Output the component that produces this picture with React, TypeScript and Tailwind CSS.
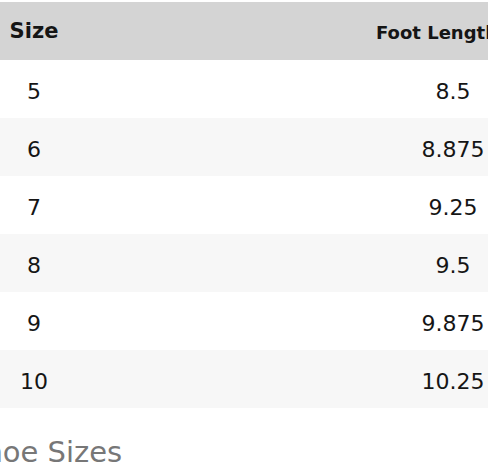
import React from 'react'

const rows = [
  { size: '5', foot: '8.5' },
  { size: '6', foot: '8.875' },
  { size: '7', foot: '9.25' },
  { size: '8', foot: '9.5' },
  { size: '9', foot: '9.875' },
  { size: '10', foot: '10.25' },
]

export default function App() {
  return (
    <div className="w-[488px] h-[466px] overflow-hidden bg-white pt-[2px] text-[#151515] font-['DejaVu_Sans',sans-serif]">
      {/* Header */}
      <div className="flex h-[58px] items-center bg-[#d4d4d4] pt-[2px] whitespace-nowrap">
        <div className="w-[68px] shrink-0 text-center text-[21px] font-bold">Size</div>
        <div className="pl-[308px] text-[18px] font-bold">Foot Length (inches)</div>
      </div>

      {/* Rows */}
      {rows.map((r, i) => (
        <div
          key={r.size}
          className={`flex h-[58px] items-center pt-[4px] text-[22px] ${i % 2 === 1 ? 'bg-[#f7f7f7]' : 'bg-white'}`}
        >
          <div className="w-[68px] shrink-0 text-center">{r.size}</div>
          <div className="flex-1" />
          <div className="w-[70px] shrink-0 text-center">{r.foot}</div>
        </div>
      ))}

      {/* Caption */}
      <div className="mt-[29px] -ml-[34px] whitespace-nowrap text-[29px] leading-[31px] text-[#777]">
        Shoe Sizes
      </div>
    </div>
  )
}
